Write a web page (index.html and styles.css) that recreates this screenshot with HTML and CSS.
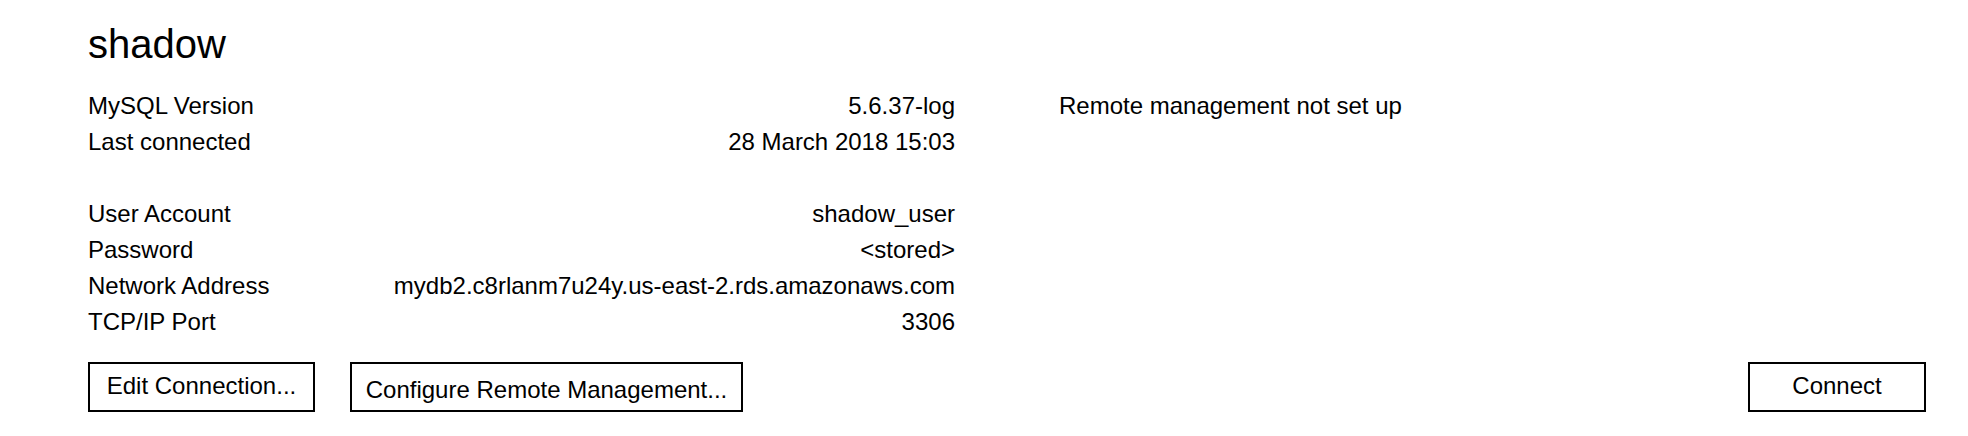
FILE: index.html
```html
<!DOCTYPE html>
<html lang="en">
<head>
<meta charset="utf-8">
<title>shadow</title>
<link rel="stylesheet" href="styles.css">
</head>
<body>
<main class="panel">
  <h1 class="title">shadow</h1>
  <div class="details">
    <div class="info">
      <dl class="group">
        <div class="row"><dt>MySQL Version</dt><dd>5.6.37-log</dd></div>
        <div class="row"><dt>Last connected</dt><dd>28 March 2018 15:03</dd></div>
      </dl>
      <dl class="group">
        <div class="row"><dt>User Account</dt><dd>shadow_user</dd></div>
        <div class="row"><dt>Password</dt><dd>&lt;stored&gt;</dd></div>
        <div class="row"><dt>Network Address</dt><dd>mydb2.c8rlanm7u24y.us-east-2.rds.amazonaws.com</dd></div>
        <div class="row"><dt>TCP/IP Port</dt><dd>3306</dd></div>
      </dl>
    </div>
    <p class="remote">Remote management not set up</p>
  </div>
  <div class="actions">
    <button type="button" class="button button-edit">Edit Connection...</button>
    <button type="button" class="button button-configure">Configure Remote Management...</button>
    <button type="button" class="button button-connect">Connect</button>
  </div>
</main>
</body>
</html>
```
FILE: styles.css
```css
* {
  box-sizing: border-box;
}

body {
  margin: 0;
  background: #fff;
  color: #000;
  font-family: "Helvetica Neue", "Liberation Sans", Arial, sans-serif;
  font-size: 24px;
  font-weight: 300;
  line-height: 36px;
}

.panel {
  padding: 20px 42px 24px 88px;
}

.title {
  margin: 0 0 20px;
  font-size: 40px;
  font-weight: 300;
  line-height: 48px;
}

.details {
  display: grid;
  grid-template-columns: 867px 1fr;
  column-gap: 104px;
}

.info {
  display: grid;
  row-gap: 36px;
}

.group,
.group dd,
.remote {
  margin: 0;
}

.row {
  display: flex;
  justify-content: space-between;
}

.actions {
  display: flex;
  gap: 35px;
  margin-top: 22px;
}

.button {
  height: 50px;
  padding: 0 0 2px;
  border: 2px solid #000;
  border-radius: 0;
  background: #fff;
  color: inherit;
  font: inherit;
}

.button-edit {
  width: 227px;
}

.button-configure {
  width: 393px;
  padding: 6px 0 0;
}

.button-connect {
  width: 178px;
  margin-left: auto;
}
```
